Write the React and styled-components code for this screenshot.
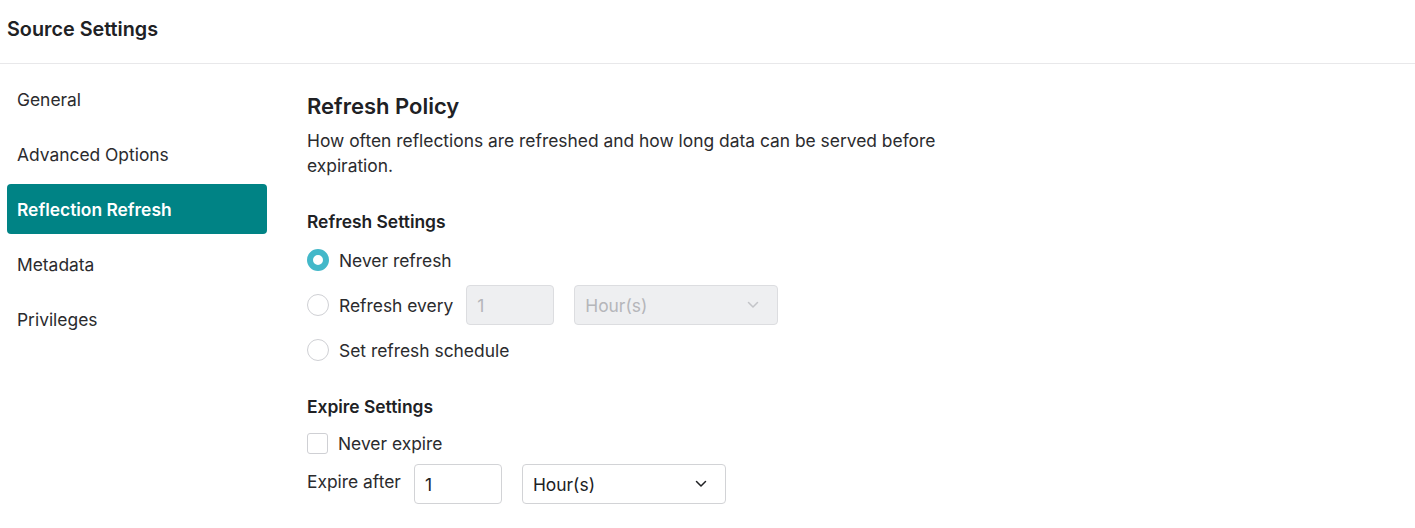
import React from 'react'
import styled, { createGlobalStyle } from 'styled-components'

const GlobalStyle = createGlobalStyle`
  body {
    margin: 0;
    font-family: Inter, 'Noto Sans', sans-serif;
    color: #202124;
    background: #fff;
  }
  * { box-sizing: border-box; }
`

const Page = styled.div`
  width: 1415px;
  height: 528px;
  overflow: hidden;
`

const Header = styled.div`
  height: 64px;
  padding: 0 7px 5px;
  display: flex;
  align-items: center;
  border-bottom: 1px solid #e8e8ea;
  font-size: 19.8px;
  font-weight: 600;
`

const Body = styled.div`
  display: flex;
`

const Sidebar = styled.nav`
  width: 260px;
  margin: 10px 0 0 7px;
  display: flex;
  flex-direction: column;
  gap: 5px;
`

const NavItem = styled.div`
  height: 50px;
  display: flex;
  align-items: center;
  padding-left: 10px;
  font-size: 17.4px;
  border-radius: 4px;
  color: ${p => (p.$active ? '#fff' : '#2b2b2e')};
  background: ${p => (p.$active ? '#008385' : 'transparent')};
  font-weight: ${p => (p.$active ? 600 : 400)};
`

const Content = styled.main`
  margin-left: 40px;
  padding-top: 27px;
`

const Title = styled.h2`
  margin: 0;
  font-size: 22px;
  font-weight: 600;
  line-height: 30px;
`

const Desc = styled.p`
  margin: 7px 0 0;
  max-width: 690px;
  font-size: 17.4px;
  line-height: 25px;
  color: #2b2b2e;
`

const SectionTitle = styled.h3`
  margin: ${p => p.$top || '32px'} 0 0;
  font-size: 17.4px;
  font-weight: 600;
  line-height: 24px;
`

const Options = styled.div`
  margin-top: ${p => p.$top || '6px'};
  display: flex;
  flex-direction: column;
  gap: ${p => p.$gap || '5px'};
`

const Row = styled.label`
  height: ${p => p.$h || '40px'};
  display: flex;
  align-items: center;
  font-size: 17.4px;
  color: #2b2b2e;
`

const Radio = styled.span`
  width: 22px;
  height: 22px;
  border-radius: 50%;
  margin-right: 10px;
  flex-shrink: 0;
  border: ${p => (p.$checked ? '6px solid #43b8c9' : '1px solid #cfd0d4')};
  background: #fff;
`

const Check = styled.span`
  width: 21px;
  height: 21px;
  border: 1px solid #cfd0d4;
  border-radius: 3px;
  margin-right: 10px;
  background: #fff;
`

const Field = styled.div`
  width: 88px;
  height: 40px;
  border-radius: 4px;
  border: 1px solid ${p => (p.$disabled ? '#dcdde0' : '#d2d3d6')};
  background: ${p => (p.$disabled ? '#eeeff1' : '#fff')};
  color: ${p => (p.$disabled ? '#b5b6ba' : '#202124')};
  display: flex;
  align-items: center;
  padding-left: 10px;
  font-size: 17.4px;
  margin-left: ${p => p.$ml || '0'};
`

const Select = styled(Field)`
  width: 204px;
  justify-content: space-between;
  padding-right: 18px;
  margin-left: 20px;
  svg { color: ${p => (p.$disabled ? '#c3c4c8' : '#202124')}; }
`

const Label = styled.span`
  font-size: 17.4px;
  color: #2b2b2e;
  margin-right: 13px;
  align-self: flex-start;
  margin-top: 10px;
`

const Chevron = () => (
  <svg width="12" height="8" viewBox="0 0 12 8" fill="none">
    <path d="M1.5 1.5 6 6l4.5-4.5" stroke="currentColor" strokeWidth="1.5" strokeLinecap="round" strokeLinejoin="round" />
  </svg>
)

const navItems = ['General', 'Advanced Options', 'Reflection Refresh', 'Metadata', 'Privileges']

export default function App() {
  return (
    <Page>
      <GlobalStyle />
      <Header>Source Settings</Header>
      <Body>
        <Sidebar>
          {navItems.map(n => (
            <NavItem key={n} $active={n === 'Reflection Refresh'}>{n}</NavItem>
          ))}
        </Sidebar>
        <Content>
          <Title>Refresh Policy</Title>
          <Desc>
            How often reflections are refreshed and how long data can be served before expiration.
          </Desc>
          <SectionTitle>Refresh Settings</SectionTitle>
          <Options>
            <Row><Radio $checked />Never refresh</Row>
            <Row>
              <Radio />Refresh every
              <Field $disabled $ml="13px">1</Field>
              <Select $disabled>Hour(s)<Chevron /></Select>
            </Row>
            <Row><Radio />Set refresh schedule</Row>
          </Options>
          <SectionTitle $top="25px">Expire Settings</SectionTitle>
          <Options $top="6px" $gap="0px">
            <Row $h="36px"><Check />Never expire</Row>
            <Row $h="46px">
              <Label>Expire after</Label>
              <Field>1</Field>
              <Select>Hour(s)<Chevron /></Select>
            </Row>
          </Options>
        </Content>
      </Body>
    </Page>
  )
}
